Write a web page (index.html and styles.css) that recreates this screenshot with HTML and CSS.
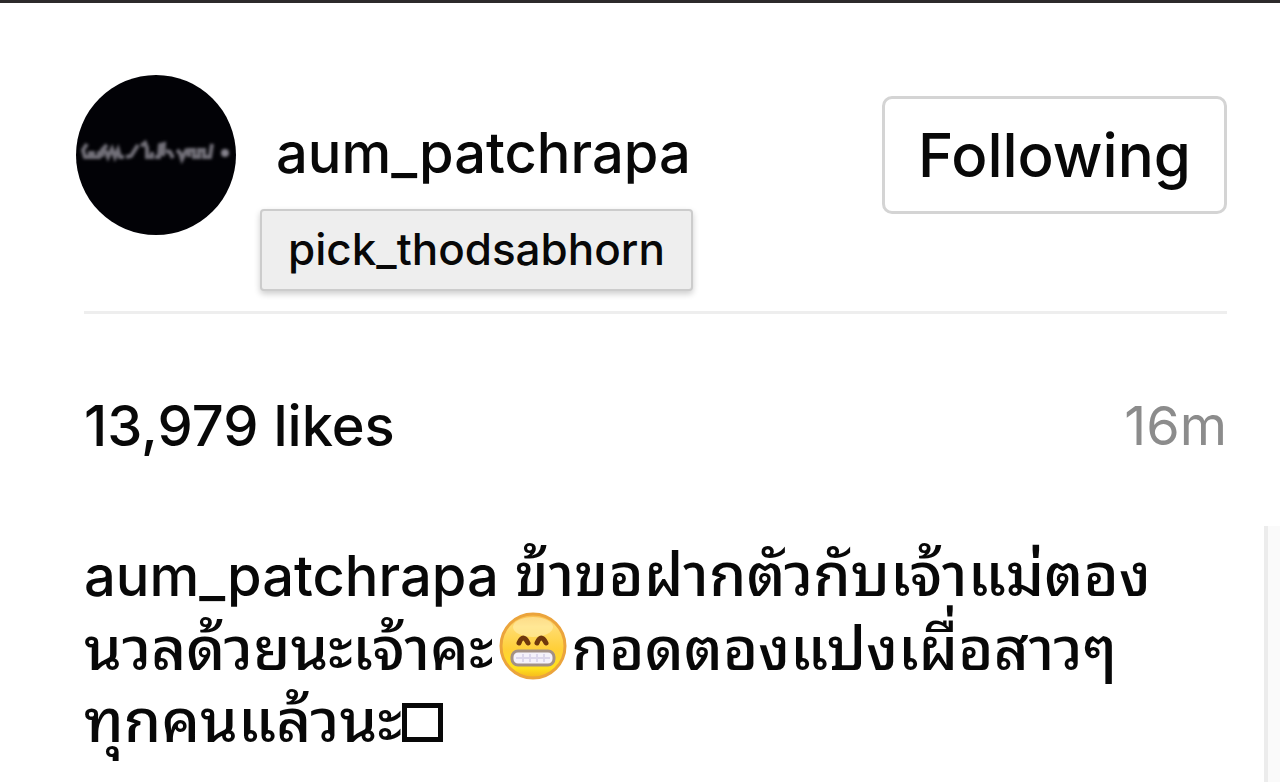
FILE: index.html
```html
<!DOCTYPE html>
<html lang="th">
<head>
<meta charset="utf-8">
<title>aum_patchrapa</title>
<link rel="stylesheet" href="styles.css">
</head>
<body>
<article class="post">
  <header class="head">
    <svg class="avatar" viewBox="0 0 160 160" aria-hidden="true">
      <defs><filter id="soft" x="-10%" y="-50%" width="120%" height="200%"><feGaussianBlur stdDeviation="1.6"/></filter></defs>
      <circle cx="80" cy="80" r="80" fill="#020206"/>
      <g fill="none" stroke="#85828c" stroke-width="4" filter="url(#soft)">
        <path d="M11 69l-4 6 2 7h5v-6M17 76v6h6v-6M26 82v-7l5-5M29 75l3 7 4-8 3 8 3-7 2 7h4M50 82l5-1 7-11M65 71l4-3 2 5v9h5v-5M79 82h4l1-12 4-1-1 12M90 76l4 1 3 6M101 75l3 3 2 6 5-10M113 82v-7h5v7h5v-7h5v7h6l2-13" opacity=".85"/>
        <ellipse cx="149" cy="78" rx="2" ry="2"/>
      </g>
    </svg>
    <div class="names">
      <a class="user" href="#">aum_patchrapa</a>
      <div class="tip" role="tooltip">pick_thodsabhorn</div>
    </div>
    <button class="follow" type="button">Following</button>
  </header>
  <div class="stats">
    <span class="likes">13,979 likes</span>
    <time class="age">16m</time>
  </div>
  <div class="body">
    <p class="caption"><a class="author" href="#">aum_patchrapa</a> ข้าขอฝากตัวกับเจ้าแม่ตอง<br>นวลด้วยนะเจ้าคะ<svg class="emoji" viewBox="0 0 68 68" role="img" aria-label="grinning face">
      <defs>
        <linearGradient id="face" x1="0" y1="0" x2="0" y2="1">
          <stop offset="0" stop-color="#f8ba48"/><stop offset=".2" stop-color="#ffdc70"/><stop offset=".55" stop-color="#ffcf38"/><stop offset=".85" stop-color="#ffe21c"/><stop offset="1" stop-color="#f5b51d"/>
        </linearGradient>
      </defs>
      <circle cx="34" cy="34" r="32" fill="url(#face)" stroke="#eba43c" stroke-width="3"/>
      <ellipse cx="34" cy="15" rx="20" ry="10" fill="#fff0b4" opacity=".55"/>
      <path d="M20 31q4-10 9 0M38 31q4-10 9 0" fill="none" stroke="#70380c" stroke-width="5" stroke-linecap="round"/>
      <rect x="13" y="39" width="42" height="14" rx="6" fill="#f5f2fb" stroke="#a29085" stroke-width="3"/>
      <path d="M17 46h34M24 42v8M31 42v8M38 42v8M45 42v8" stroke="#dcd7ec" stroke-width="2"/>
    </svg>กอดตองแปงเผื่อสาวๆ<br>ทุกคนแล้วนะ<span class="box"></span></p>
    <div class="rail"></div>
  </div>
</article>
</body>
</html>
```
FILE: styles.css
```css
* { box-sizing: border-box; }
body {
  margin: 0;
  background: #fff;
  color: #080808;
  font-family: Inter, "Noto Sans Thai Looped", "Noto Sans Thai", "Noto Sans", sans-serif;
  font-weight: 500;
}
a { color: inherit; text-decoration: none; }
.post {
  display: flex;
  flex-direction: column;
  min-height: 100vh;
  border-top: 3px solid #2d2a2b;
  padding: 72px 0 0 84px;
}
.head {
  display: flex;
  align-items: flex-start;
  margin-right: 53px;
  padding-bottom: 20px;
  border-bottom: 3px solid #eee;
}
.avatar { flex: none; width: 160px; height: 160px; margin-left: -8px; }
.names { flex: 1; padding: 48px 0 0 24px; }
.user { display: block; font-size: 56px; line-height: 60px; margin-left: 16px; }
.tip {
  width: max-content;
  margin-top: 26px;
  padding: 10px 26px 12px;
  background: #eee;
  border: 2px solid #ccc;
  border-radius: 4px;
  box-shadow: 0 3px 6px rgba(0, 0, 0, .2);
  font-size: 44px;
  line-height: 56px;
}
.follow {
  margin-top: 21px;
  padding: 20px 33px;
  border: 3px solid #d4d4d4;
  border-radius: 10px;
  background: #fff;
  color: inherit;
  font: inherit;
  font-size: 60px;
  line-height: 72px;
}
.stats {
  display: flex;
  justify-content: space-between;
  margin: 76px 53px 0 0;
  font-size: 56px;
  line-height: 72px;
}
.age { color: #8c8c8c; font-size: 54px; font-weight: 400; }
.body { display: flex; flex: 1; justify-content: space-between; margin-top: 64px; }
.caption { margin: 12px 0 0; font-size: 60px; line-height: 72px; white-space: nowrap; }
.author { font-size: 56px; }
.emoji { width: 68px; height: 68px; margin: -20px 4px -10px 6px; vertical-align: 0; }
.box { display: inline-block; width: 41px; height: 39px; border: 5px solid #080808; }
.rail { width: 16px; background: #fafafa; border-left: 4px solid #ececec; }
```
